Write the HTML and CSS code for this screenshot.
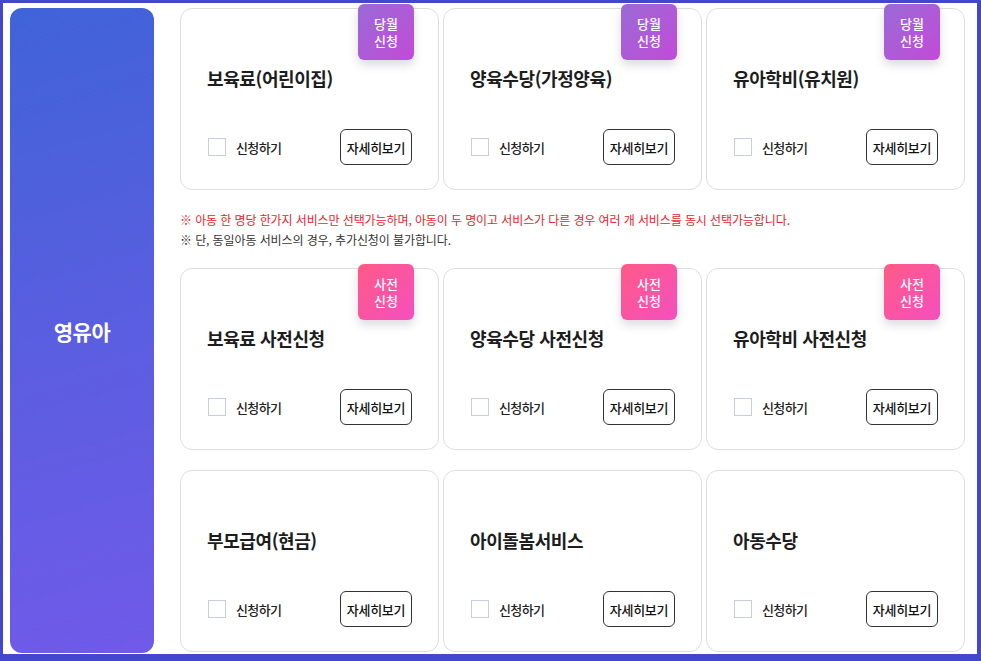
FILE: index.html
```html
<!DOCTYPE html>
<html lang="ko">
<head>
<meta charset="utf-8">
<title>영유아 서비스 신청</title>
<link rel="stylesheet" href="styles.css">
</head>
<body>
<div class="frame">
  <aside class="side"><span class="side-title">영유아</span></aside>
  <main class="main">
    <section class="grid">
      <div class="card">
        <span class="badge badge-month"><span class="badge-line">당월</span><span class="badge-line">신청</span></span>
        <h3 class="card-title">보육료(어린이집)</h3>
        <div class="card-foot">
          <label class="check"><span class="box"></span><span class="check-text">신청하기</span></label>
          <button class="detail">자세히보기</button>
        </div>
      </div>
      <div class="card">
        <span class="badge badge-month"><span class="badge-line">당월</span><span class="badge-line">신청</span></span>
        <h3 class="card-title">양육수당(가정양육)</h3>
        <div class="card-foot">
          <label class="check"><span class="box"></span><span class="check-text">신청하기</span></label>
          <button class="detail">자세히보기</button>
        </div>
      </div>
      <div class="card">
        <span class="badge badge-month"><span class="badge-line">당월</span><span class="badge-line">신청</span></span>
        <h3 class="card-title">유아학비(유치원)</h3>
        <div class="card-foot">
          <label class="check"><span class="box"></span><span class="check-text">신청하기</span></label>
          <button class="detail">자세히보기</button>
        </div>
      </div>
    </section>
    <div class="notes">
      <p class="note note-red">※ 아동 한 명당 한가지 서비스만 선택가능하며, 아동이 두 명이고 서비스가 다른 경우 여러 개 서비스를 동시 선택가능합니다.</p>
      <p class="note">※ 단, 동일아동 서비스의 경우, 추가신청이 불가합니다.</p>
    </div>
    <section class="grid">
      <div class="card">
        <span class="badge badge-pre"><span class="badge-line">사전</span><span class="badge-line">신청</span></span>
        <h3 class="card-title">보육료 사전신청</h3>
        <div class="card-foot">
          <label class="check"><span class="box"></span><span class="check-text">신청하기</span></label>
          <button class="detail">자세히보기</button>
        </div>
      </div>
      <div class="card">
        <span class="badge badge-pre"><span class="badge-line">사전</span><span class="badge-line">신청</span></span>
        <h3 class="card-title">양육수당 사전신청</h3>
        <div class="card-foot">
          <label class="check"><span class="box"></span><span class="check-text">신청하기</span></label>
          <button class="detail">자세히보기</button>
        </div>
      </div>
      <div class="card">
        <span class="badge badge-pre"><span class="badge-line">사전</span><span class="badge-line">신청</span></span>
        <h3 class="card-title">유아학비 사전신청</h3>
        <div class="card-foot">
          <label class="check"><span class="box"></span><span class="check-text">신청하기</span></label>
          <button class="detail">자세히보기</button>
        </div>
      </div>
      <div class="card">
        <h3 class="card-title">부모급여(현금)</h3>
        <div class="card-foot">
          <label class="check"><span class="box"></span><span class="check-text">신청하기</span></label>
          <button class="detail">자세히보기</button>
        </div>
      </div>
      <div class="card">
        <h3 class="card-title">아이돌봄서비스</h3>
        <div class="card-foot">
          <label class="check"><span class="box"></span><span class="check-text">신청하기</span></label>
          <button class="detail">자세히보기</button>
        </div>
      </div>
      <div class="card">
        <h3 class="card-title">아동수당</h3>
        <div class="card-foot">
          <label class="check"><span class="box"></span><span class="check-text">신청하기</span></label>
          <button class="detail">자세히보기</button>
        </div>
      </div>
    </section>
  </main>
</div>
</body>
</html>
```
FILE: styles.css
```css
* { box-sizing: border-box; }
html, body { margin: 0; padding: 0; }
body {
  background: #4347cd;
  font-family: "Noto Sans CJK KR", "Noto Sans", sans-serif;
  color: #222;
  height: 661px;
  overflow: hidden;
}
.frame {
  margin: 3px 4px 0 3px;
  height: 651px;
  background: #fff;
  display: flex;
  align-items: flex-start;
  padding: 5px 12px 0 7px;
  overflow: hidden;
}
.side {
  flex: 0 0 144px;
  height: 645px;
  margin-right: 26px;
  border-radius: 12px;
  background: linear-gradient(165deg, #4063d8 0%, #5a5ee0 50%, #705ae9 100%);
  display: flex;
  align-items: center;
  justify-content: center;
}
.side-title {
  color: #fff;
  font-size: 21px;
  font-weight: 700;
  letter-spacing: -0.5px;
}
.main {
  flex: 0 0 785px;
  display: flex;
  flex-direction: column;
}
.grid {
  display: grid;
  grid-template-columns: repeat(3, 259px);
  column-gap: 4px;
  row-gap: 20px;
}
.card {
  position: relative;
  height: 182px;
  border: 1px solid #dedede;
  border-radius: 12px;
  background: #fff;
  display: flex;
  flex-direction: column;
  padding: 56px 26px 24px 27px;
}
.badge {
  position: absolute;
  top: -5px;
  right: 24px;
  width: 56px;
  height: 56px;
  border-radius: 6px;
  color: #fff;
  font-size: 13px;
  font-weight: 500;
  display: flex;
  flex-direction: column;
  align-items: center;
  justify-content: center;
  text-align: center;
  box-shadow: 0 5px 10px rgba(60, 60, 90, 0.18);
}
.badge-line {
  display: block;
  height: 17px;
  line-height: 17px;
}
.badge-month { background: linear-gradient(135deg, #9a6ad6 0%, #c24bd8 100%); }
.badge-pre { background: linear-gradient(135deg, #ff5a86 0%, #f54fc0 100%); }
.card-title {
  margin: 0 0 0 -1px;
  font-size: 18px;
  font-weight: 700;
  line-height: 26px;
  letter-spacing: -0.4px;
  color: #1d1d1d;
}
.card-foot {
  margin-top: auto;
  display: flex;
  align-items: center;
  justify-content: space-between;
}
.check {
  display: flex;
  align-items: center;
  gap: 10px;
}
.box {
  width: 18px;
  height: 18px;
  border: 1px solid #c8cde2;
  background: #fff;
}
.check-text {
  font-size: 13px;
  font-weight: 500;
  color: #222;
  letter-spacing: -0.6px;
}
.detail {
  width: 72px;
  height: 36px;
  border: 1px solid #333;
  border-radius: 6px;
  background: #fff;
  font-family: inherit;
  font-size: 13px;
  font-weight: 500;
  color: #111;
  letter-spacing: -0.3px;
  padding: 0;
}
.notes {
  margin: 20px 0 18px;
}
.note {
  margin: 0;
  font-size: 12px;
  line-height: 20px;
  letter-spacing: -0.1px;
  color: #333;
}
.note-red { color: #e8232e; }
```
